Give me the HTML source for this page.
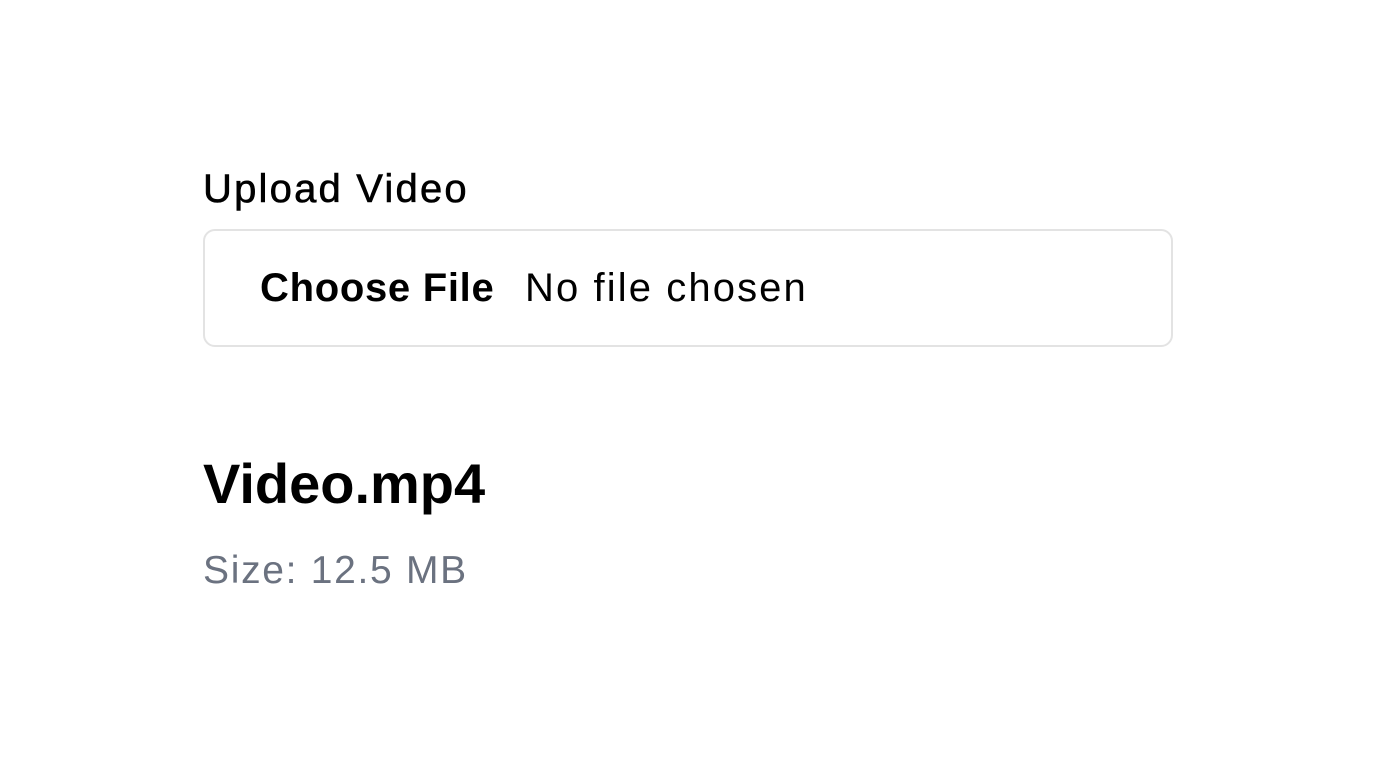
<!DOCTYPE html>
<html><head><meta charset="utf-8"><style>
html,body{margin:0;padding:0;background:#fff;width:1376px;height:768px;overflow:hidden;font-family:"Liberation Sans",sans-serif;color:#000}
.t{position:absolute;line-height:1;white-space:nowrap}
.box{position:absolute;left:203px;top:229px;width:966px;height:114px;border:2px solid #e3e3e3;border-radius:12px}
</style></head><body>
<div class="t" style="left:203px;top:169px;font-size:40px;letter-spacing:2.2px;-webkit-text-stroke:0.6px #000">Upload Video</div>
<div class="box"></div>
<div class="t" style="left:260px;top:268px;font-size:40px;font-weight:bold;letter-spacing:0.7px">Choose File</div>
<div class="t" style="left:525px;top:268px;font-size:40px;letter-spacing:2.1px">No file chosen</div>
<div class="t" style="left:203px;top:456px;font-size:56px;font-weight:bold">Video.mp4</div>
<div class="t" style="left:203px;top:551px;font-size:39px;letter-spacing:1.7px;color:#6b7280">Size: 12.5 MB</div>
</body></html>
